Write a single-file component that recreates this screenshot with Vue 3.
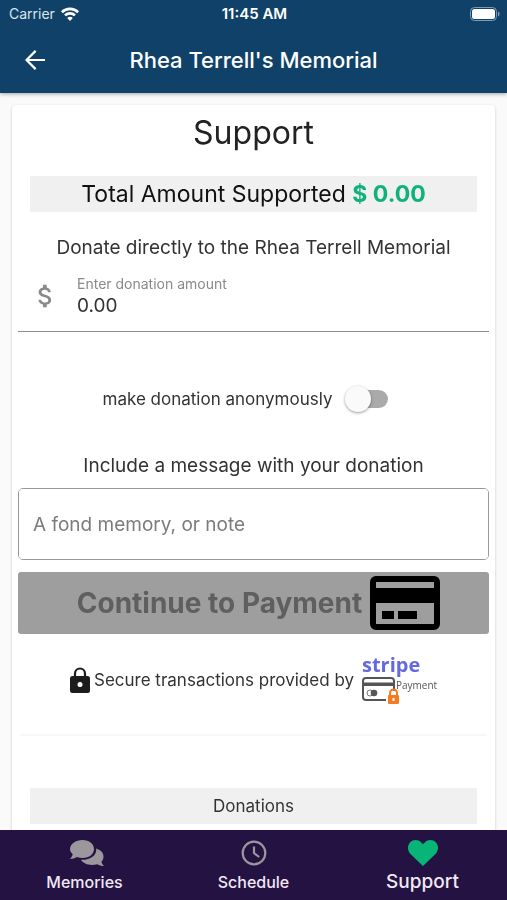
<template>
  <div class="screen">
    <header class="top">
      <div class="status-bar">
        <div class="carrier">
          <span>Carrier</span>
          <svg width="18" height="14" viewBox="0 0 18 14" fill="none" stroke="#fff" stroke-width="2.6">
            <path d="M0.9 5.2a11.6 11.6 0 0 1 16.2 0" />
            <path d="M4 8.4a7.2 7.2 0 0 1 10 0" />
            <path d="M9 14L6.2 11.1a4 4 0 0 1 5.6 0z" fill="#fff" stroke="none" />
          </svg>
        </div>
        <strong class="time">11:45 AM</strong>
        <div class="battery">
          <svg width="30" height="14" viewBox="0 0 30 14">
            <rect x="0.5" y="0.5" width="26" height="13" rx="4" fill="none" stroke="#7f9bb3" />
            <rect x="2" y="2" width="23" height="10" rx="2.5" fill="#fff" />
            <path d="M28 4.5c2.2 1 2.2 4 0 5z" fill="#7f9bb3" />
          </svg>
        </div>
      </div>
      <div class="app-bar">
        <button class="back-btn" type="button" aria-label="Back">
          <svg width="20" height="20" viewBox="0 0 20 20" fill="none" stroke="#fff" stroke-width="2.2">
            <path d="M20 10H2M10.6 0.9L1.5 10l9.1 9.1" />
          </svg>
        </button>
        <h1>Rhea Terrell's Memorial</h1>
      </div>
    </header>

    <main class="content">
      <div class="card">
        <h2>Support</h2>
        <p class="band total">Total Amount Supported <b>$ {{ total.toFixed(2) }}</b></p>

        <form @submit.prevent>
          <p class="lead">Donate directly to the Rhea Terrell Memorial</p>
          <div class="amount-field">
            <svg width="15" height="24" viewBox="6 3 12 18" fill="#8a8a8a">
              <path d="M11.8 10.9c-2.27-.59-3-1.2-3-2.15 0-1.09 1.01-1.85 2.7-1.85 1.78 0 2.44.85 2.5 2.1h2.21c-.07-1.72-1.12-3.3-3.21-3.81V3h-3v2.16c-1.94.42-3.5 1.68-3.5 3.61 0 2.31 1.91 3.46 4.7 4.13 2.5.6 3 1.48 3 2.41 0 .69-.49 1.79-2.7 1.79-2.06 0-2.87-.92-2.98-2.1h-2.2c.12 2.19 1.76 3.42 3.68 3.83V21h3v-2.15c1.95-.37 3.5-1.5 3.5-3.55 0-2.84-2.43-3.81-4.7-4.4z" />
            </svg>
            <div class="amount-text">
              <label for="amount">Enter donation amount</label>
              <input id="amount" v-model="amount" type="text" inputmode="decimal">
            </div>
          </div>

          <div class="switch-row">
            <label for="anonymous">make donation anonymously</label>
            <input id="anonymous" v-model="anonymous" class="switch" type="checkbox">
          </div>

          <label class="lead message-label" for="message">Include a message with your donation</label>
          <textarea id="message" v-model="message" rows="1" placeholder="A fond memory, or note"></textarea>

          <button class="pay-btn" type="submit" :disabled="!canPay">
            <span>Continue to Payment</span>
            <svg width="70" height="54" viewBox="0 0 70 54">
              <rect x="3" y="3" width="64" height="48" rx="3" fill="none" stroke="#000" stroke-width="6" />
              <path d="M3 12h64v15H3zM12 35h12v8H12zM28 35h19v8H28z" fill="#000" />
            </svg>
          </button>
        </form>

        <div class="secure">
          <svg width="20" height="26" viewBox="0 0 20 26">
            <path d="M5 10V6.5a5 5 0 0 1 10 0V10" fill="none" stroke="#1c1c1c" stroke-width="2.2" />
            <rect y="9" width="20" height="17" rx="2.5" fill="#1c1c1c" />
            <circle cx="10" cy="17.5" r="2.5" fill="#fff" />
          </svg>
          <span>Secure transactions provided by</span>
          <svg class="stripe" width="75" height="52" viewBox="0 0 75 52" role="img" aria-label="stripe Payment">
            <text class="stripe-name" x="0" y="18">stripe</text>
            <text class="stripe-sub" x="34" y="35">Payment</text>
            <rect x="1" y="24" width="31" height="22" rx="3" fill="#fff" stroke="#555" stroke-width="2" />
            <path d="M1 28.5h31V32H1z" fill="#555" />
            <circle cx="8" cy="39" r="3" fill="#fff" stroke="#777" />
            <circle cx="12" cy="39" r="3.3" fill="#555" />
            <path d="M24 37h13v12H24z" fill="#fff" />
            <path d="M28 42v-3a3.5 3.5 0 0 1 7 0v3" fill="none" stroke="#f47b20" stroke-width="2" />
            <rect x="26" y="41" width="11" height="9" rx="1" fill="#f47b20" />
            <path d="M31.5 44v3" stroke="#fff" stroke-width="2" />
          </svg>
        </div>

        <hr>
        <h3 class="band">Donations</h3>
      </div>
    </main>

    <nav class="tabs">
      <a href="#memories">
        <svg width="38" height="26" viewBox="-4 0 38 26" fill="#9b979c">
          <path d="M12.5 0C19.5 0 24 4 24 9s-4.500 9-11.500 9c-2 0-3.800-.3-5.500-1C5 18.200 2.500 19 0 19c1.500-1.600 2.400-3.200 2.700-4.700C1 12.800 0 11 0 9 0 4 5.500 0 12.500 0z" />
          <path d="M26.200 8.500C31 10 33.500 13 33.500 16.500c0 2-.7 3.900-2.100 5.300.3 1.500 1.200 2.900 2.600 4.200-2.500 0-4.800-.7-6.800-1.800-1.700.5-3.400.8-5.200.8-5 0-9-2-11-5.200C19.500 20.300 27 16 26.200 8.500z" />
        </svg>
        <span>Memories</span>
      </a>
      <a href="#schedule">
        <svg width="26" height="26" viewBox="0 0 26 26" fill="none" stroke="#9b979c" stroke-width="2.2">
          <circle cx="13" cy="13" r="11.3" />
          <path d="M13 6.5V13l5.2 4" />
        </svg>
        <span>Schedule</span>
      </a>
      <a href="#support" class="active">
        <svg width="30" height="26" viewBox="0 0 30 26" fill="#06b577">
          <path d="M15 26L2.5 14C-.8 10.700-.8 5.300 2.200 2.200 5.300-.8 10.200-.6 13.200 2.400L15 4.200l1.800-1.800c3-3 7.900-3.200 11-.2 3 3.100 3 8.500-.3 11.800z" />
        </svg>
        <span>Support</span>
      </a>
    </nav>
  </div>
</template>

<script setup>
import { ref, computed } from 'vue'

const total = ref(0)
const amount = ref('0.00')
const anonymous = ref(false)
const message = ref('')

// payment stays locked until an amount is entered
const canPay = computed(() => Number(amount.value) > 0)
</script>

<style>
body {
  margin: 0;
}
</style>

<style scoped>
* {
  box-sizing: border-box;
}

.screen {
  display: flex;
  flex-direction: column;
  height: 100vh;
  background: #fafafa;
  color: #333;
  font-family: Inter, "Liberation Sans", sans-serif;
}

h1,
h2,
h3,
p {
  margin: 0;
  font-weight: 400;
}

svg {
  display: block;
  flex-shrink: 0;
}

input,
textarea,
button {
  font-family: inherit;
}

/* Header */
.top {
  position: relative;
  background: #104269;
  color: #fff;
  box-shadow: 0 1px 4px rgba(0, 0, 0, 0.35);
}

.status-bar {
  display: grid;
  grid-template-columns: 1fr auto 1fr;
  align-items: center;
  height: 27px;
  padding: 0 7px 0 9px;
  font-size: 14px;
}

.carrier {
  display: flex;
  align-items: center;
  gap: 6px;
  color: #dbe4ec;
}

.time {
  font-size: 15px;
  font-weight: 600;
}

.battery {
  justify-self: end;
}

.app-bar {
  display: grid;
  grid-template-columns: 70px 1fr 70px;
  align-items: center;
  height: 66px;
}

.back-btn {
  display: flex;
  justify-content: center;
  padding: 12px;
  border: none;
  background: none;
  cursor: pointer;
}

.app-bar h1 {
  font-size: 22px;
  font-weight: 500;
  line-height: 32px;
  text-align: center;
}

/* Card */
.content {
  flex: 1;
  min-height: 0;
  overflow: hidden;
  padding: 12px 12px 0;
}

.card {
  min-height: 100%;
  padding: 8px 6px 12px;
  border-radius: 4px;
  background: #fff;
  box-shadow: 0 1px 3px rgba(0, 0, 0, 0.2);
}

.card h2 {
  color: #222;
  font-size: 32px;
  line-height: 40px;
  text-align: center;
}

.band {
  margin: 0 12px;
  background: #f0f0f0;
  font-size: 17px;
  line-height: 36px;
  text-align: center;
}

.total {
  margin-top: 23px;
  color: #111;
  font-size: 23px;
}

.total b {
  color: #10b27a;
}

.lead {
  display: block;
  margin-top: 24px;
  font-size: 19px;
  line-height: 24px;
  text-align: center;
}

.amount-field {
  display: flex;
  align-items: center;
  gap: 24px;
  height: 64px;
  margin-top: 8px;
  padding: 0 20px 8px;
  border-bottom: 1px solid #8c8c8c;
}

.amount-text {
  display: flex;
  flex: 1;
  flex-direction: column;
}

.amount-text label {
  color: #8a8a8a;
  font-size: 14px;
  line-height: 20px;
}

.amount-text input {
  height: 24px;
  padding: 0;
  border: none;
  outline: none;
  background: none;
  color: #333;
  font-size: 19px;
}

.switch-row {
  display: flex;
  align-items: center;
  justify-content: center;
  gap: 14px;
  height: 38px;
  margin-top: 48px;
  padding-right: 16px;
  font-size: 17px;
}

.switch {
  position: relative;
  width: 42px;
  height: 18px;
  margin: 0;
  border-radius: 9px;
  appearance: none;
  background: #aaa;
  cursor: pointer;
}

.switch::before {
  content: '';
  position: absolute;
  top: -4px;
  left: -1px;
  width: 26px;
  height: 26px;
  border-radius: 50%;
  background: #fafafa;
  box-shadow: 0 1px 3px rgba(0, 0, 0, 0.4);
}

.switch:checked::before {
  left: 17px;
}

.message-label {
  margin-top: 36px;
}

textarea {
  display: block;
  width: 100%;
  height: 72px;
  margin-top: 10px;
  padding: 24px 14px;
  border: 1px solid #999;
  border-radius: 5px;
  outline: none;
  resize: none;
  color: #333;
  font-size: 19px;
  line-height: 24px;
}

textarea::placeholder {
  color: #7c7c7c;
}

.pay-btn {
  display: flex;
  align-items: center;
  justify-content: center;
  gap: 8px;
  width: 100%;
  height: 62px;
  margin-top: 12px;
  padding: 0 0 0 10px;
  border: none;
  border-radius: 3px;
  background: #9e9e9e;
  color: #5f5f5f;
  font-size: 28px;
  font-weight: 700;
  white-space: nowrap;
}

.secure {
  display: flex;
  align-items: center;
  justify-content: center;
  gap: 4px;
  margin-top: 20px;
  font-size: 17px;
}

.stripe {
  margin-left: 4px;
  overflow: visible;
}

.stripe-name {
  fill: #6469df;
  font-family: "Open Sans", sans-serif;
  font-size: 20px;
  font-weight: 700;
}

.stripe-sub {
  fill: #555;
  font-family: "Open Sans", sans-serif;
  font-size: 10px;
}

hr {
  margin: 28px 2px 52px;
  border: none;
  border-top: 2px solid #f7f7f7;
}

/* Bottom tabs */
.tabs {
  display: grid;
  grid-template-columns: repeat(3, 1fr);
  height: 70px;
  background: #241242;
}

.tabs a {
  display: flex;
  flex-direction: column;
  align-items: center;
  gap: 4px;
  padding-top: 10px;
  color: #f0e9f5;
  font-size: 16px;
  font-weight: 500;
  line-height: 24px;
  text-decoration: none;
}

.tabs .active {
  font-size: 19px;
}
</style>
